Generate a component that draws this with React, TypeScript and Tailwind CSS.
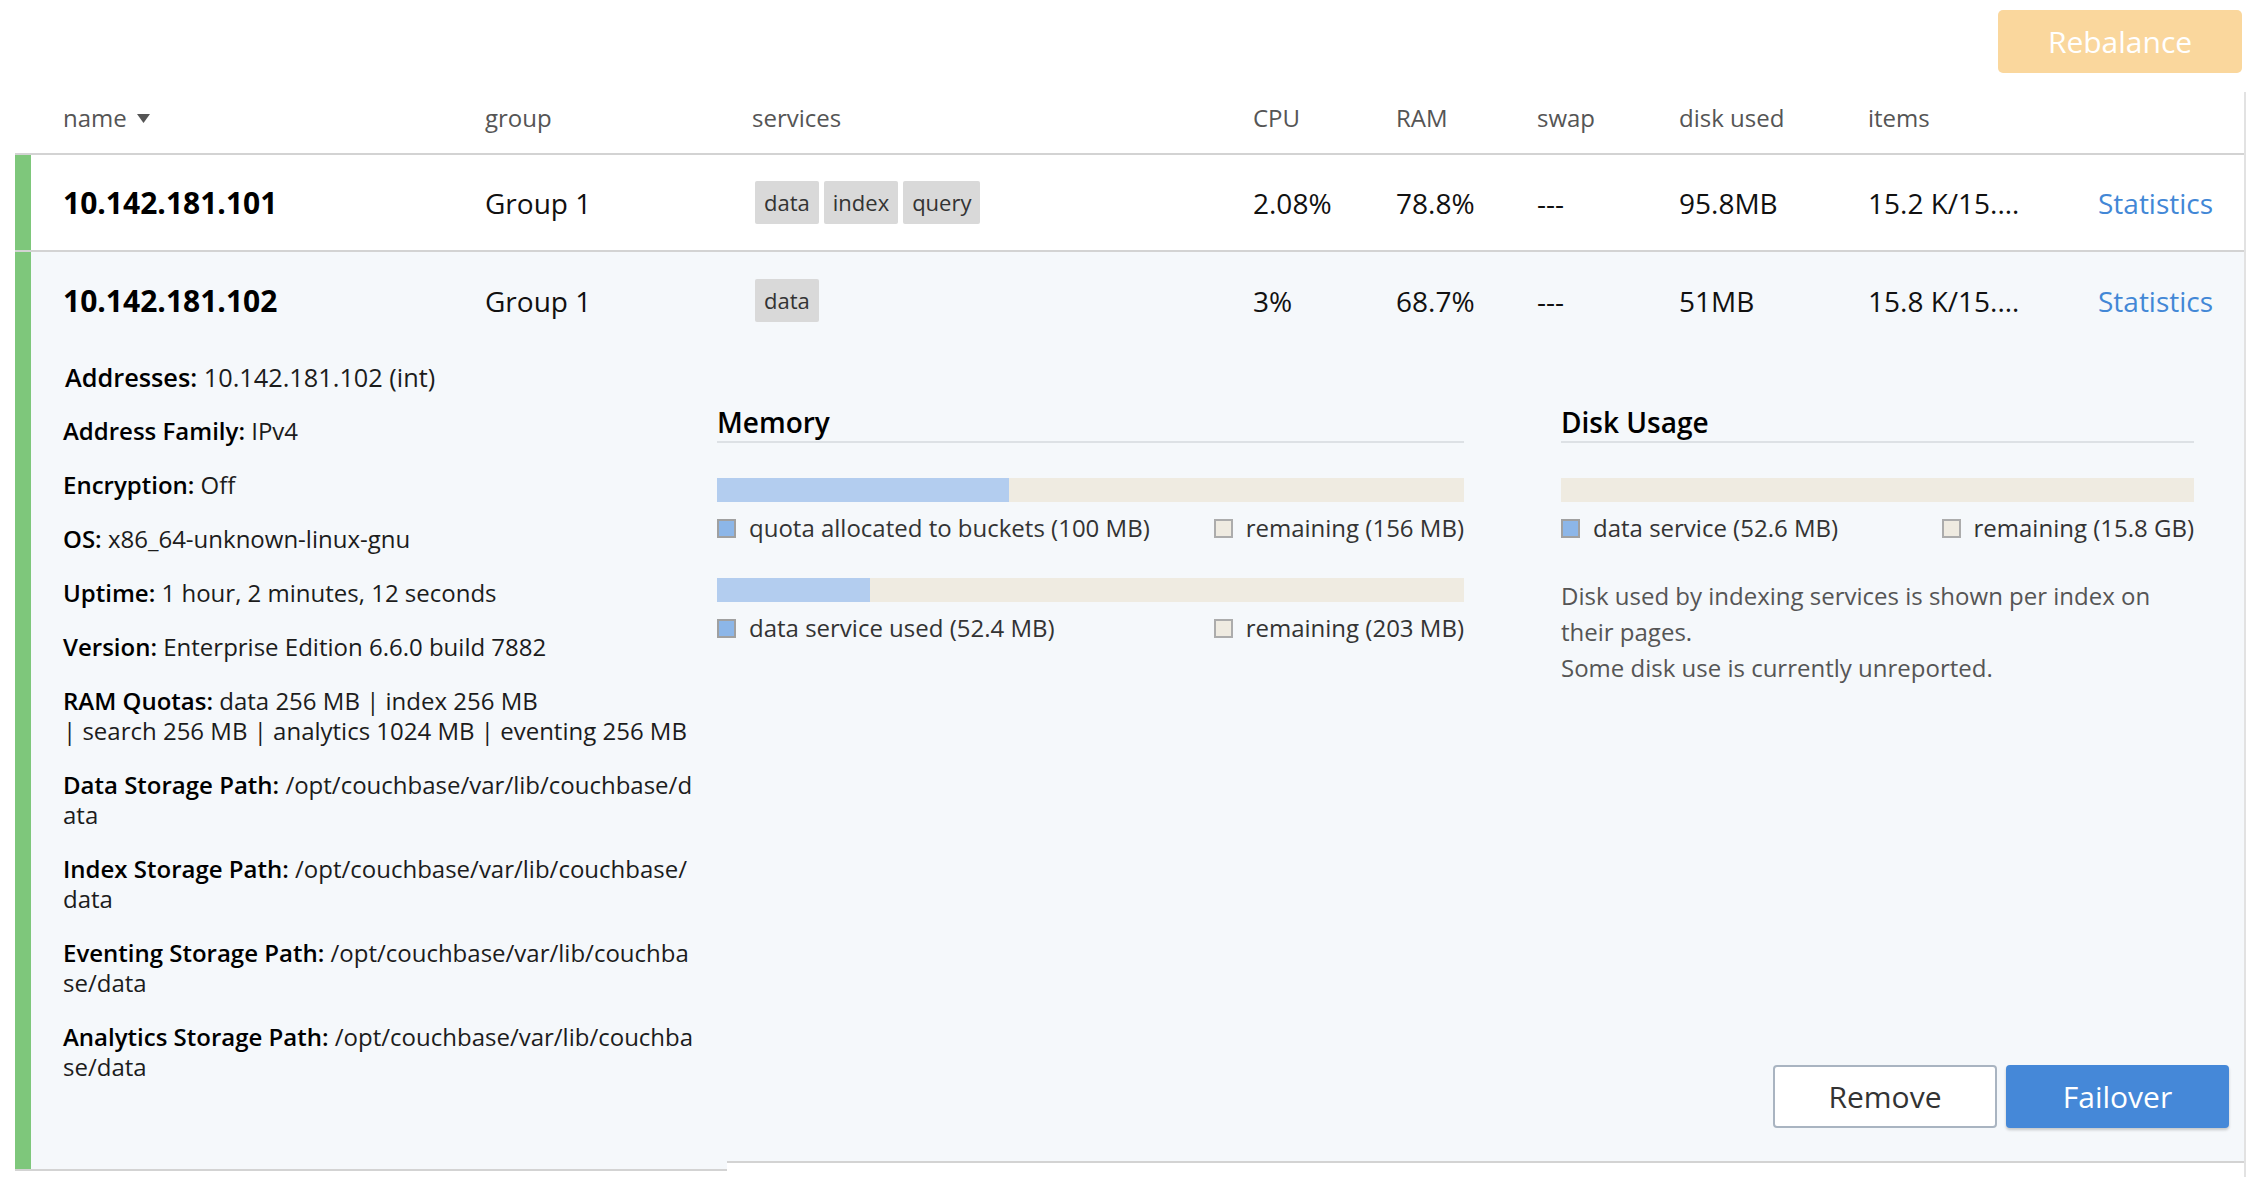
import React from "react";

type Server = {
  host: string;
  group: string;
  services: string[];
  cpu: string;
  ram: string;
  swap: string;
  disk: string;
  items: string;
};

const servers: Server[] = [
  { host: "10.142.181.101", group: "Group 1", services: ["data", "index", "query"], cpu: "2.08%", ram: "78.8%", swap: "---", disk: "95.8MB", items: "15.2 K/15.2 K" },
  { host: "10.142.181.102", group: "Group 1", services: ["data"], cpu: "3%", ram: "68.7%", swap: "---", disk: "51MB", items: "15.8 K/15.8 K" },
];

const cols = "grid grid-cols-[422px_267px_501px_143px_141px_142px_189px_230px_1fr] items-center";

function ServerRow({ s, open }: { s: Server; open?: boolean }) {
  return (
    <div className={`flex h-[97px] ${open ? "bg-[#f5f8fb]" : "border-b-2 border-[#d3d3d3]"}`}>
      <div className="w-4 shrink-0 bg-[#7ec77b]" />
      <div className={`${cols} flex-1 pl-8 text-[28px] text-[#111]`}>
        <div className="text-[30px] font-bold text-black">{s.host}</div>
        <div>{s.group}</div>
        <div className="ml-[3px] flex gap-[5px]">
          {s.services.map((sv) => (
            <span key={sv} className="flex h-[43px] items-center rounded-[2px] bg-[#d9d9d9] px-[9px] text-[22px] text-[#333]">
              {sv}
            </span>
          ))}
        </div>
        <div>{s.cpu}</div>
        <div>{s.ram}</div>
        <div>{s.swap}</div>
        <div>{s.disk}</div>
        <div className="w-[156px] truncate">{s.items}</div>
        <div className="text-[#4287d6]">Statistics</div>
      </div>
    </div>
  );
}

function Legend({ left, right }: { left: string; right: string }) {
  return (
    <div className="mt-[11px] flex justify-between text-[24px] leading-[30px] text-[#333]">
      <div className="flex items-center gap-[13px]">
        <span className="h-[19px] w-[19px] border-2 border-[#a0a0a0] bg-[#8cb6e8]" />
        {left}
      </div>
      <div className="flex items-center gap-[13px]">
        <span className="h-[19px] w-[19px] border-2 border-[#acacac] bg-[#efebe1]" />
        {right}
      </div>
    </div>
  );
}

function Bar({ pct }: { pct: number }) {
  return (
    <div className="mt-[35px] h-6 bg-[#efebe1]">
      <div className="h-full bg-[#b3cdef]" style={{ width: `${pct}%` }} />
    </div>
  );
}

function Detail({ label, children, wrap }: { label: string; children: React.ReactNode; wrap?: boolean }) {
  return (
    <p className={`mb-6 ${wrap ? "break-all" : ""}`}>
      <span className="font-semibold text-black">{label}:</span> {children}
    </p>
  );
}

export default function App() {
  const [first, second] = servers;
  return (
    <div className="h-[1188px] w-[2250px] bg-white font-['Open_Sans','Liberation_Sans',sans-serif]">
      <div className="flex justify-end pr-2 pt-[10px]">
        <button className="h-[63px] w-[244px] rounded-[5px] bg-[#fad79d] text-[30px] text-white">Rebalance</button>
      </div>

      <div className="ml-[15px] mt-[19px] w-[2231px] border-r-2 border-[#e2e2e2] pb-[6px]">
        {/* header */}
        <div className="border-b-2 border-[#d3d3d3] pb-5 pl-12 pt-[11px]">
          <div className={`${cols} text-[24px] leading-[30px] text-[#555]`}>
            <div className="flex items-center gap-[10px]">
              name
              <svg width="13" height="9" viewBox="0 0 13 9">
                <path d="M0 0h13L6.5 9z" fill="#555" />
              </svg>
            </div>
            <div>group</div>
            <div>services</div>
            <div>CPU</div>
            <div>RAM</div>
            <div>swap</div>
            <div>disk used</div>
            <div>items</div>
            <div />
          </div>
        </div>

        <ServerRow s={first} />
        <ServerRow s={second} open />

        {/* expanded details */}
        <div className="flex">
          <div className="flex w-[712px] shrink-0 border-b-2 border-[#d3d3d3] bg-[#f5f8fb]">
            <div className="w-4 shrink-0 bg-[#7ec77b]" />
            <div className="w-[664px] pb-[63px] pl-8 pt-[13px] text-[24px] leading-[30px] text-[#1c1c1c]">
              <p className="mb-6 ml-[2px] text-[25.3px]">
                <span className="font-semibold text-black">Addresses:</span> 10.142.181.102 (int)
              </p>
              <Detail label="Address Family">IPv4</Detail>
              <Detail label="Encryption">Off</Detail>
              <Detail label="OS">x86_64-unknown-linux-gnu</Detail>
              <Detail label="Uptime">1 hour, 2 minutes, 12 seconds</Detail>
              <Detail label="Version">Enterprise Edition 6.6.0 build 7882</Detail>
              <Detail label="RAM Quotas">
                data 256 MB <span className="whitespace-nowrap">| index 256 MB</span>{" "}
                <span className="whitespace-nowrap">| search 256 MB</span>{" "}
                <span className="whitespace-nowrap">| analytics 1024 MB</span>{" "}
                <span className="whitespace-nowrap">| eventing 256 MB</span>
              </Detail>
              <Detail label="Data Storage Path" wrap>/opt/couchbase/var/lib/couchbase/data</Detail>
              <Detail label="Index Storage Path" wrap>/opt/couchbase/var/lib/couchbase/data</Detail>
              <Detail label="Eventing Storage Path" wrap>/opt/couchbase/var/lib/couchbase/data</Detail>
              <Detail label="Analytics Storage Path" wrap>/opt/couchbase/var/lib/couchbase/data</Detail>
            </div>
          </div>

          <div className="mb-2 flex flex-1 flex-col border-b-2 border-[#d3d3d3] bg-[#f5f8fb] pb-[33px] pr-[15px]">
            <div className="-ml-[10px] flex gap-[97px] pt-[55px]">
              <div className="w-[747px]">
                <h3 className="border-b-2 border-[#dde1e5] pb-px text-[28px] font-semibold leading-[36px] text-black">Memory</h3>
                <Bar pct={(100 / 256) * 100} />
                <Legend left="quota allocated to buckets (100 MB)" right="remaining (156 MB)" />
                <Bar pct={(52.4 / 255.4) * 100} />
                <Legend left="data service used (52.4 MB)" right="remaining (203 MB)" />
              </div>
              <div className="w-[633px]">
                <h3 className="border-b-2 border-[#dde1e5] pb-px text-[28px] font-semibold leading-[36px] text-black">Disk Usage</h3>
                <Bar pct={0} />
                <Legend left="data service (52.6 MB)" right="remaining (15.8 GB)" />
                <p className="mt-[35px] pr-10 text-[24px] leading-[36px] text-[#555]">
                  Disk used by indexing services is shown per index on their pages.
                  <br />
                  Some disk use is currently unreported.
                </p>
              </div>
            </div>
            <div className="mt-auto flex justify-end gap-[9px]">
              <button className="h-[63px] w-[224px] rounded-[4px] border-2 border-[#a9b4c1] bg-white text-[30px] text-[#333]">Remove</button>
              <button className="h-[63px] w-[223px] rounded-[4px] bg-[#4588d8] text-[30px] text-white shadow-[0_2px_3px_rgba(0,0,0,0.2)]">Failover</button>
            </div>
          </div>
        </div>
      </div>
    </div>
  );
}
